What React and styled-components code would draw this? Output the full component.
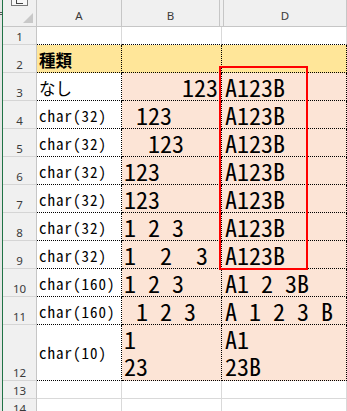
import React from "react"
import styled, { createGlobalStyle } from "styled-components"

const GlobalStyle = createGlobalStyle`
  html,
  body {
    margin: 0;
    padding: 0;
    background: #fff;
  }

  body {
    overflow: hidden;
  }
`

const HEAD_COLS = "34px 85px 98px 4px 1fr"
const BODY_COLS = "34px 85px 100px 1fr"

const lines = {
  dot: "1px dotted #000",
  grid: "1px solid #d9d9d9",
  head: "1px solid #c6c6c6",
}

const fills = {
  white: "#fff",
  yellow: "#ffe699",
  peach: "#fce4d6",
}

const Sheet = styled.div`
  position: relative;
  display: flex;
  width: 347px;
  height: 411px;
  overflow: hidden;
  background: #fff;
`

// workbook edge: light strip with the green frame line
const Rail = styled.div`
  position: relative;
  flex: none;
  width: 2px;
  background: #e6e6e6;
  border-right: 1px solid #217346;

  &::before {
    content: "";
    position: absolute;
    top: 12px;
    left: 0;
    width: 2px;
    height: 3px;
    box-sizing: border-box;
    border-top: 1px solid #555;
    border-bottom: 1px solid #555;
  }
`

const Grid = styled.div`
  display: flex;
  flex: 1;
  flex-direction: column;
  min-width: 0;
`

const Row = styled.div`
  display: grid;
  flex: none;
  grid-template-columns: ${(p) => p.$cols || BODY_COLS};
  height: ${(p) => p.$h || 28}px;
`

const Cell = styled.div`
  display: flex;
  align-items: ${(p) => (p.$middle ? "center" : "flex-end")};
  justify-content: ${(p) => (p.$right ? "flex-end" : "flex-start")};
  min-width: 0;
  overflow: hidden;
  box-sizing: border-box;
  background: ${(p) => fills[p.$fill || "white"]};
  border-right: ${(p) => lines[p.$r || "grid"]};
  border-bottom: ${(p) => lines[p.$b || "grid"]};
`

const HeadCell = styled(Cell)`
  justify-content: center;
  padding-bottom: ${(p) => (p.$col ? 3 : 0)}px;
  background: #f0f0f0;
  border-right: 1px solid #c6c6c6;
  border-bottom: 1px solid ${(p) => (p.$col ? "#c6c6c6" : "#d5d5d5")};
  color: #3a3a3a;
  font: 11.5px/14px "Noto Sans", sans-serif;
`

const Corner = styled(HeadCell)`
  position: relative;
  justify-content: flex-end;
  padding: 0 3px 3px 0;
  overflow: visible;
`

const SelectAll = styled.span`
  width: 0;
  height: 0;
  border-style: solid;
  border-width: 0 0 10px 10px;
  border-color: transparent transparent #c8c8c8 transparent;
`

// outline level button, scrolled half out of view
const LevelButton = styled.span`
  position: absolute;
  top: -10px;
  left: 8px;
  width: 17px;
  height: 16px;
  box-sizing: border-box;
  background: #f7f7f7;
  border: 1px solid #777;

  &::after {
    content: "";
    position: absolute;
    left: 4px;
    bottom: 1px;
    width: 6px;
    height: 4px;
    border-left: 1px solid #444;
    border-bottom: 1px solid #444;
  }
`

const Label = styled.span`
  padding: 0 0 ${(p) => (p.$middle ? 0 : 2)}px 2px;
  color: #000;
  font-family: "Noto Sans CJK JP", sans-serif;
  font-feature-settings: "hwid";
  font-size: ${(p) => (p.$jp ? 16.5 : 15)}px;
  font-weight: ${(p) => (p.$bold ? 700 : 400)};
  letter-spacing: ${(p) => (p.$jp ? 0 : 1)}px;
  line-height: 20px;
  white-space: pre;
`

const Value = styled.span`
  padding: 0 3px ${(p) => (p.$multi ? 1 : 0)}px ${(p) => p.$pl}px;
  color: #000;
  font: 24px/27px "Noto Sans CJK JP", sans-serif;
  font-feature-settings: "hwid";
  white-space: pre;
`

const Frame = styled.div`
  position: absolute;
  left: 219px;
  top: 66px;
  width: 89px;
  height: 204px;
  box-sizing: border-box;
  border: 2px solid #ff0000;
  pointer-events: none;
`

const nb = "\u00a0"

const data = [
  { n: 3, label: "なし", jp: true, b: "123", right: true, d: "A123B" },
  { n: 4, label: "char(32)", b: " 123", d: "A123B" },
  { n: 5, label: "char(32)", b: "  123", d: "A123B" },
  { n: 6, label: "char(32)", b: "123", d: "A123B" },
  { n: 7, label: "char(32)", b: "123", d: "A123B" },
  { n: 8, label: "char(32)", b: "1 2 3", d: "A123B" },
  { n: 9, label: "char(32)", b: "1  2  3", d: "A123B" },
  { n: 10, label: "char(160)", b: `1${nb}2${nb}3`, d: `A1${nb}2${nb}3B` },
  { n: 11, label: "char(160)", b: `${nb}1${nb}2${nb}3`, d: `A${nb}1${nb}2${nb}3${nb}B` },
  { n: 12, label: "char(10)", b: "1\n23", d: "A1\n23B", h: 56, multi: true },
]

const EmptyRow = ({ n, h, dotted }) => (
  <Row $h={h}>
    <HeadCell>{n}</HeadCell>
    <Cell $b={dotted ? "dot" : "grid"} />
    <Cell $b={dotted ? "dot" : "grid"} />
    <Cell $b={dotted ? "dot" : "grid"} />
  </Row>
)

const DataRow = ({ row }) => (
  <Row $h={row.h}>
    <HeadCell>{row.n}</HeadCell>
    <Cell $r="dot" $b="dot" $middle={row.multi}>
      <Label $jp={row.jp} $middle={row.multi}>
        {row.label}
      </Label>
    </Cell>
    <Cell $r="dot" $b="dot" $fill="peach" $right={row.right}>
      <Value $pl={2} $multi={row.multi}>
        {row.b}
      </Value>
    </Cell>
    <Cell $r="dot" $b="dot" $fill="peach">
      <Value $pl={3} $multi={row.multi}>
        {row.d}
      </Value>
    </Cell>
  </Row>
)

const App = () => {
  return (
    <Sheet>
      <GlobalStyle />
      <Rail />
      <Grid>
        <Row $cols={HEAD_COLS} $h={27}>
          <Corner $col>
            <LevelButton />
            <SelectAll />
          </Corner>
          <HeadCell $col>A</HeadCell>
          <HeadCell $col>B</HeadCell>
          <HeadCell $col />
          <HeadCell $col>D</HeadCell>
        </Row>
        <EmptyRow n={1} h={18} dotted />
        <Row>
          <HeadCell>2</HeadCell>
          <Cell $r="dot" $b="dot" $fill="yellow">
            <Label $jp $bold>
              種類
            </Label>
          </Cell>
          <Cell $r="dot" $b="dot" $fill="yellow" />
          <Cell $r="dot" $b="dot" $fill="yellow" />
        </Row>
        {data.map((row) => (
          <DataRow key={row.n} row={row} />
        ))}
        <EmptyRow n={13} h={18} />
        <EmptyRow n={14} h={18} />
      </Grid>
      <Frame />
    </Sheet>
  )
}

export default App
